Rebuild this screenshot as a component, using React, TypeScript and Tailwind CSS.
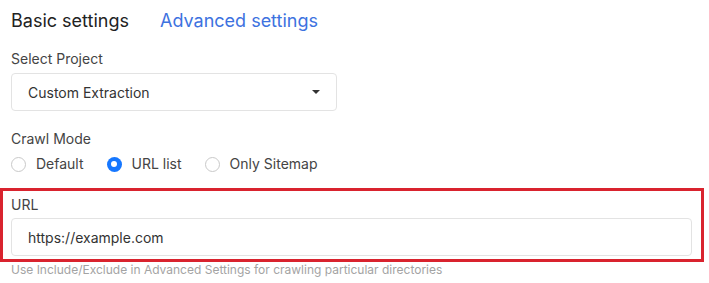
import React, { useState } from "react";

const modes = ["Default", "URL list", "Only Sitemap"];

function Radio({ checked, label, onClick }: { checked: boolean; label: string; onClick: () => void }) {
   return (
      <label className="flex items-center gap-[10px] cursor-pointer" onClick={onClick}>
         {checked ? (
            <span className="flex h-[15px] w-[15px] items-center justify-center rounded-full bg-[#1677ff]">
               <span className="h-[6px] w-[6px] rounded-full bg-white" />
            </span>
         ) : (
            <span className="h-[15px] w-[15px] rounded-full border border-[#c9c9c9] bg-white" />
         )}
         <span className="text-[14px] leading-5 text-[#444]">{label}</span>
      </label>
   );
}

export default function App() {
   const [mode, setMode] = useState("URL list");

   return (
      <div className="min-h-screen bg-white pt-[6px] font-['Inter',sans-serif]">
         <div className="px-[11px]">
            {/* Tabs */}
            <div className="flex h-[28px] items-center gap-[31px] text-[18px]">
               <span className="text-[#222]">Basic settings</span>
               <span className="text-[#3d72e0]">Advanced settings</span>
            </div>

            <div className="mt-[15px] text-[14px] leading-5 text-[#444]">Select Project</div>
            <div className="mt-[4px] flex h-[38px] w-[326px] items-center justify-between rounded-[4px] border border-[#e3e3e3] pl-[16px] pr-[16px]">
               <span className="text-[14px] text-[#333]">Custom Extraction</span>
               <svg width="8" height="4" viewBox="0 0 8 4">
                  <path d="M0 0h8L4 4z" fill="#333" />
               </svg>
            </div>

            <div className="mt-[18px] text-[14px] leading-5 text-[#444]">Crawl Mode</div>
            <div className="mt-[5px] flex h-5 items-center gap-[23px]">
               {modes.map((m) => (
                  <Radio key={m} label={m} checked={mode === m} onClick={() => setMode(m)} />
               ))}
            </div>
         </div>

         {/* URL field, highlighted */}
         <div className="mt-[14px] w-[704px] border-[3px] border-[#d9232e] pl-[8px] pr-[9px] pt-[4px] pb-[3px]">
            <div className="text-[14px] leading-5 text-[#444]">URL</div>
            <div className="mt-[3px] flex h-[38px] items-center rounded-[4px] border border-[#e3e3e3] pl-[16px]">
               <span className="text-[14px] text-[#333]">https://example.com</span>
            </div>
         </div>
         <div className="px-[11px] text-[12px] leading-4 text-[#a3a3a3]">
            Use Include/Exclude in Advanced Settings for crawling particular directories
         </div>
      </div>
   );
}
